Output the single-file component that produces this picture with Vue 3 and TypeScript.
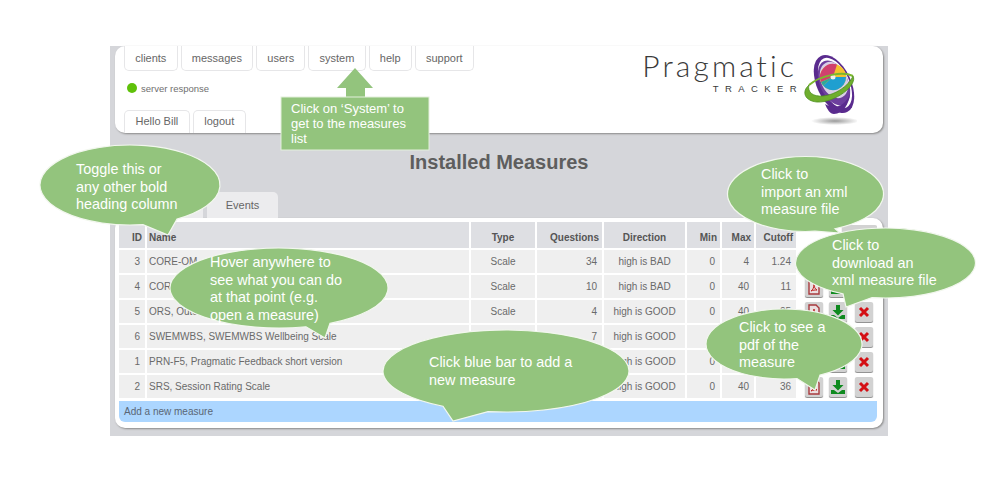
<template>
  <div class="page">
    <div class="shot">
      <header class="top">
        <div class="top-left">
          <ul class="tabs tabs--hang">
            <li v-for="t in navTabs" :key="t">{{ t }}</li>
          </ul>
          <div class="status"><span class="dot"></span>server response</div>
          <ul class="tabs tabs--sit">
            <li>Hello Bill</li>
            <li>logout</li>
          </ul>
        </div>
        <div class="brand">
          <div class="brand-text">
            <div class="brand-name">Pragmatic</div>
            <div class="brand-sub">TRACKER</div>
          </div>
          <svg class="brand-logo" width="58" height="76" viewBox="0 0 58 76">
            <defs>
              <radialGradient id="shade">
                <stop offset="0" stop-color="#9a9a9a" />
                <stop offset="1" stop-color="#ffffff" />
              </radialGradient>
            </defs>
            <ellipse cx="36" cy="67" rx="24" ry="4" fill="url(#shade)" />
            <ellipse cx="35" cy="30" rx="17" ry="31" transform="rotate(-25 35 30)" fill="#5a2b8e" />
            <ellipse cx="36" cy="29" rx="14" ry="27" transform="rotate(-25 36 29)" fill="#fff" />
            <ellipse cx="35" cy="29" rx="14" ry="24" transform="rotate(-25 35 29)" fill="#6d3f9e" />
            <ellipse cx="35" cy="26" rx="13" ry="19" transform="rotate(-25 35 26)" fill="#d9cfe6" />
            <circle cx="34" cy="23" r="13" fill="#f5c22d" />
            <path d="M34 23 L38 10.6 A13 13 0 0 0 22 28 Z" fill="#d0406e" />
            <path d="M34 23 L47 23 A13 13 0 0 1 24 31.5 Z" fill="#1f9fd0" />
            <path d="M34 23 L24 31.5 A13 13 0 0 1 22 28 Z" fill="#2fa89a" />
            <circle cx="34" cy="23" r="2.5" fill="#f3efe6" />
            <path d="M10 31 C22 21 44 17 54 22" fill="none" stroke="#7cb82f" stroke-width="2" />
            <path d="M54 22 C59 31 36 49 18 48 C6 47 2 38 10 31 C8 38 14 43 24 42 C36 41 50 32 54 22 Z" fill="#6fae2e" stroke="#4d8f1e" stroke-width="0.8" />
            <path d="M26 50 C36 56 46 52 51 40 C50 50 44 60 35 60 C31 60 28 55 26 50 Z" fill="#5a2b8e" />
          </svg>
        </div>
      </header>

      <h1 class="title">Installed Measures</h1>

      <ul class="section-tabs">
        <li></li>
        <li>Events</li>
      </ul>

      <section class="card">
        <table class="measures">
          <colgroup>
            <col v-for="(w, i) in colWidths" :key="i" :style="{ width: w + 'px' }" />
          </colgroup>
          <thead>
            <tr>
              <th class="num">ID</th>
              <th class="left">Name</th>
              <th>Type</th>
              <th class="num">Questions</th>
              <th>Direction</th>
              <th class="num">Min</th>
              <th class="num">Max</th>
              <th class="num">Cutoff</th>
              <th class="actions"><button class="btn btn--import" aria-label="import"></button></th>
            </tr>
          </thead>
          <tbody>
            <tr v-for="r in rows" :key="r.id">
              <td class="num">{{ r.id }}</td>
              <td class="left">{{ r.name }}</td>
              <td class="center">{{ r.type }}</td>
              <td class="num">{{ r.questions }}</td>
              <td class="center">{{ r.direction }}</td>
              <td class="num">{{ r.min }}</td>
              <td class="num">{{ r.max }}</td>
              <td class="num">{{ r.cutoff }}</td>
              <td class="actions">
                <div class="btns">
                  <button class="btn" aria-label="pdf">
                    <svg width="14" height="16" viewBox="0 0 14 16">
                      <path d="M2 1h7l3 3v11H2z" fill="#eadfe0" stroke="#a83a3e" stroke-width="1.4" />
                      <path d="M4 12c2-1 3-4 3-7 0 3 1 5 3 6-2 0-4 0-6 1z" fill="none" stroke="#c02020" stroke-width="1" />
                    </svg>
                  </button>
                  <button class="btn" aria-label="download">
                    <svg width="16" height="16" viewBox="0 0 16 16">
                      <path d="M6 1h4v5h3.5L8 11.5 2.5 6H6z" fill="#0f8a1f" />
                      <path d="M1 11h3l4 3 4-3h3v4H1z" fill="#0f8a1f" />
                    </svg>
                  </button>
                  <button class="btn btn--delete" aria-label="delete">
                    <svg width="14" height="14" viewBox="0 0 14 14">
                      <path d="M3 3l8 8M11 3l-8 8" stroke="#d40f14" stroke-width="3" fill="none" />
                    </svg>
                  </button>
                </div>
              </td>
            </tr>
          </tbody>
        </table>
        <div class="add-bar">Add a new measure</div>
      </section>
    </div>

    <!-- annotations laid over the screenshot -->
    <svg class="notes" width="1000" height="487" viewBox="0 0 1000 487">
      <path d="M355 68 L373 88 L365 88 L365 98 L346 98 L346 88 L337 88 Z" fill="#93c47d" />
      <rect x="281" y="97" width="148" height="53" fill="#93c47d" stroke="#e3efdc" stroke-width="1" />
      <text class="note-text note-text--small" x="291" y="113">Click on ‘System’ to</text>
      <text class="note-text note-text--small" x="291" y="128">get to the measures</text>
      <text class="note-text note-text--small" x="291" y="143">list</text>
      <g v-for="b in bubbles" :key="b.lines[0]">
        <path :d="bubblePath(b)" fill="#93c47d" stroke="#f2f7ee" stroke-width="1.2" />
        <text
          v-for="(line, i) in b.lines"
          :key="line"
          class="note-text"
          :x="b.textX"
          :y="b.textY + i * b.leading"
        >{{ line }}</text>
      </g>
    </svg>
  </div>
</template>

<script setup lang="ts">
interface Row {
  id: number
  name: string
  type: string
  questions: string
  direction: string
  min: string
  max: string
  cutoff: string
}

interface Bubble {
  cx: number
  cy: number
  rx: number
  ry: number
  baseA: number
  baseB: number
  tipX: number
  tipY: number
  textX: number
  textY: number
  leading: number
  lines: string[]
}

const navTabs = ['clients', 'messages', 'users', 'system', 'help', 'support']
const colWidths = [26, 322, 64, 65, 81, 33, 32, 40, 79]

// cells the callouts cover completely are left empty
const rows: Row[] = [
  { id: 3, name: 'CORE-OM', type: 'Scale', questions: '34', direction: 'high is BAD', min: '0', max: '4', cutoff: '1.24' },
  { id: 4, name: 'CORE-10', type: 'Scale', questions: '10', direction: 'high is BAD', min: '0', max: '40', cutoff: '11' },
  { id: 5, name: 'ORS, Outcome', type: 'Scale', questions: '4', direction: 'high is GOOD', min: '0', max: '40', cutoff: '25' },
  { id: 6, name: 'SWEMWBS, SWEMWBS Wellbeing Scale', type: '', questions: '7', direction: 'high is GOOD', min: '', max: '', cutoff: '' },
  { id: 1, name: 'PRN-F5, Pragmatic Feedback short version', type: '', questions: '', direction: 'high is GOOD', min: '0', max: '', cutoff: '' },
  { id: 2, name: 'SRS, Session Rating Scale', type: '', questions: '', direction: 'high is GOOD', min: '0', max: '40', cutoff: '36' },
]

// later bubbles sit on top of earlier ones
const bubbles: Bubble[] = [
  { cx: 130, cy: 185, rx: 90, ry: 40, baseA: 143, baseB: 177, tipX: 168, tipY: 235, textX: 76, textY: 174, leading: 17.5, lines: ['Toggle this or', 'any other bold', 'heading column'] },
  { cx: 805.5, cy: 194, rx: 78, ry: 37.5, baseA: 815, baseB: 835, tipX: 840, tipY: 233, textX: 761, textY: 179, leading: 17.5, lines: ['Click to', 'import an xml', 'measure file'] },
  { cx: 279, cy: 288, rx: 109, ry: 40, baseA: 306, baseB: 330, tipX: 325, tipY: 338, textX: 210, textY: 267, leading: 17.6, lines: ['Hover anywhere to', 'see what you can do', 'at that point (e.g.', 'open a measure)'] },
  { cx: 885.5, cy: 263, rx: 90, ry: 35, baseA: 843, baseB: 872, tipX: 846, tipY: 307, textX: 832, textY: 250, leading: 17.5, lines: ['Click to', 'download an', 'xml measure file'] },
  { cx: 506, cy: 371, rx: 123, ry: 41, baseA: 443, baseB: 488, tipX: 453, tipY: 421, textX: 429, textY: 367, leading: 17.5, lines: ['Click blue bar to add a', 'new measure'] },
  { cx: 784, cy: 344, rx: 78, ry: 35, baseA: 797, baseB: 820, tipX: 815, tipY: 390, textX: 739, textY: 332, leading: 17.5, lines: ['Click to see a', 'pdf of the', 'measure'] },
]

const edgeY = (b: Bubble, x: number) => {
  const t = (x - b.cx) / b.rx
  return b.cy + b.ry * Math.sqrt(1 - t * t)
}

const bubblePath = (b: Bubble) =>
  `M${b.baseA} ${edgeY(b, b.baseA)} A${b.rx} ${b.ry} 0 1 1 ${b.baseB} ${edgeY(b, b.baseB)} L${b.tipX} ${b.tipY} Z`
</script>

<style>
html,
body {
  margin: 0;
  background: #fff;
}
</style>

<style scoped>
.page {
  position: relative;
  width: 1000px;
  height: 487px;
  padding: 46px 0 0 110px;
  box-sizing: border-box;
  overflow: hidden;
  background: #fff;
  font-family: "Liberation Sans", Arial, sans-serif;
  color: #666;
}
.shot {
  width: 778px;
  height: 390px;
  padding: 0 5px;
  box-sizing: border-box;
  background: #d5d6da;
}
.top {
  display: flex;
  justify-content: space-between;
  height: 87px;
  border-radius: 10px;
  background: #fff;
  box-shadow: 1px 1px 2px #8a8a8a;
}
.top-left {
  display: flex;
  flex-direction: column;
  padding-left: 9px;
}
.tabs {
  display: flex;
  gap: 3px;
  margin: 0;
  padding: 0;
  list-style: none;
}
.tabs li {
  display: flex;
  align-items: center;
  height: 24px;
  padding: 0 10.5px;
  border: 1px solid #e6e6e8;
  background: #fff;
  font-size: 11px;
  color: #666;
}
.tabs--hang li {
  border-top: none;
  border-radius: 0 0 5px 5px;
  padding: 0 10.2px;
}
.tabs--sit {
  margin-top: auto;
}
.tabs--sit li {
  height: 23px;
  box-sizing: border-box;
  padding-bottom: 2px;
  border-bottom: none;
  border-radius: 5px 5px 0 0;
}
.status {
  display: flex;
  align-items: center;
  gap: 4px;
  height: 14px;
  margin-top: 10px;
  padding-left: 3px;
  font-size: 9.5px;
  color: #6f6f6f;
}
.dot {
  width: 10px;
  height: 10px;
  border-radius: 50%;
  background: #5fc10a;
}
.brand {
  display: flex;
  align-items: flex-start;
  padding: 8px 26px 0 0;
}
.brand-text {
  margin-top: -2px;
  text-align: right;
}
.brand-name {
  font-family: Lato, "Open Sans", sans-serif;
  font-weight: 300;
  font-size: 30px;
  line-height: 26px;
  letter-spacing: 3.1px;
  color: #3a3a3a;
}
.brand-sub {
  font-size: 9.5px;
  line-height: 12px;
  letter-spacing: 6.4px;
  margin: 5px -6px 0 0;
  color: #3a3a3a;
}
.brand-logo {
  margin: 0 0 0 2px;
}
.title {
  margin: 18px 0 0;
  font-size: 20px;
  line-height: 22px;
  font-weight: 700;
  text-align: center;
  color: #5e5e5e;
}
.section-tabs {
  display: flex;
  gap: 4px;
  height: 26px;
  margin: 19px 0 0;
  padding: 0 0 0 10px;
  list-style: none;
}
.section-tabs li {
  display: flex;
  align-items: center;
  justify-content: center;
  width: 71px;
  border-radius: 5px 5px 0 0;
  background: #ececee;
  font-size: 11px;
  color: #666;
}
.section-tabs li:first-child {
  width: 78px;
}
.card {
  height: 210px;
  box-sizing: border-box;
  padding: 2px 6px 6px 2px;
  border-radius: 10px;
  background: #fff;
  box-shadow: 1px 1px 2px #8a8a8a;
}
.measures {
  width: 762px;
  table-layout: fixed;
  border-collapse: separate;
  border-spacing: 2px;
  font-size: 10px;
}
.measures th,
.measures td {
  padding: 0 5px 1px;
  overflow: hidden;
  white-space: nowrap;
}
.measures th {
  height: 26px;
  box-sizing: border-box;
  padding: 5px 3px 0;
  background: #dedfe3;
  font-weight: 700;
  color: #555;
}
.measures td {
  height: 23px;
  box-sizing: border-box;
  background: #efefef;
  color: #6a6a6a;
}
.measures .left {
  text-align: left;
  padding-left: 2px;
}
.measures .center {
  text-align: center;
}
.measures .num {
  text-align: right;
}
.measures .actions {
  padding: 0;
  background: #fff;
  text-align: right;
}
.btns {
  display: flex;
  gap: 6px;
  padding: 0 4px 0 7px;
}
.btn {
  display: flex;
  align-items: center;
  justify-content: center;
  width: 18px;
  height: 20px;
  padding: 0;
  border: none;
  border-radius: 2px;
  background: #d2d2d2;
  box-shadow: 0 1px 1px #888;
}
.btn--delete {
  margin-left: 2px;
}
.btn--import {
  display: inline-block;
  width: 35px;
  vertical-align: middle;
}
.add-bar {
  height: 21px;
  margin: 1px 0 0 2px;
  padding-left: 5px;
  width: 758px;
  box-sizing: border-box;
  border-radius: 0 0 6px 6px;
  background: #acd6ff;
  font-size: 10px;
  line-height: 21px;
  color: #5a6675;
}
.notes {
  position: absolute;
  top: 0;
  left: 0;
}
.note-text {
  font-family: "Liberation Sans", Arial, sans-serif;
  font-size: 14.4px;
  fill: #fff;
}
.note-text--small {
  font-size: 13px;
}
</style>
